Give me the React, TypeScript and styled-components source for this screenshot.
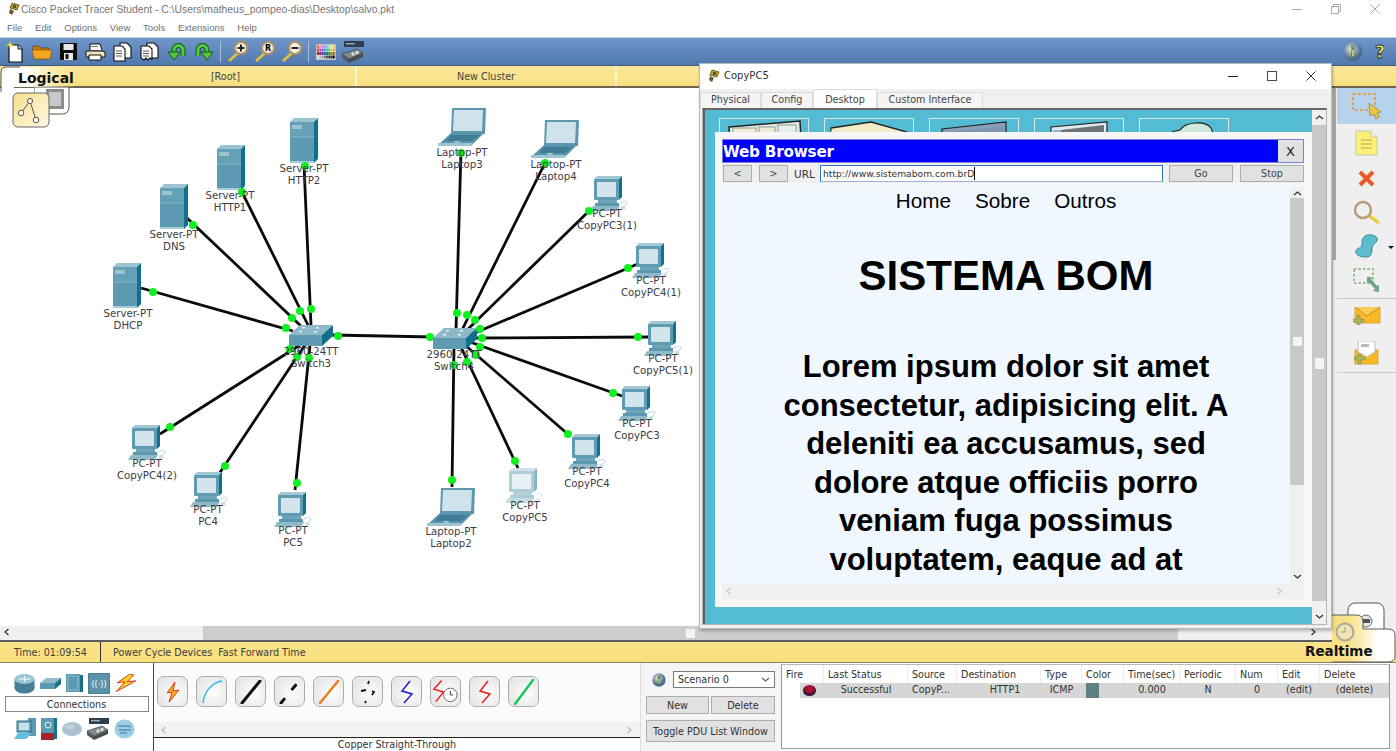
import React from 'react';
import styled, { createGlobalStyle } from 'styled-components';

const Global = createGlobalStyle`
  html, body { margin: 0; padding: 0; background: #fff; overflow: hidden; }
  * { box-sizing: border-box; }
`;
const UI = `"DejaVu Sans", "Liberation Sans", sans-serif`;
const SANS = `"Liberation Sans", Arial, sans-serif`;

const Page = styled.div`
  position: relative; width: 1396px; height: 751px; overflow: hidden;
  display: flex; flex-direction: column; background: #fff; font-family: ${UI};
`;
const TitleBar = styled.div`
  height: 18px; display: flex; align-items: center; padding-left: 7px; gap: 0;
  font: 10.35px ${SANS}; color: #757575; background: #fff;
`;
const WinControls = styled.div`
  margin-left: auto; display: flex; align-items: center; gap: 29px; padding-right: 16px; margin-top: 0;
`;
const MenuBar = styled.div`
  height: 19px; display: flex; align-items: center; padding-left: 7px; gap: 12.8px;
  font: 9.5px ${SANS}; color: #6e6e6e; background: #fff;
`;
const Toolbar = styled.div`
  height: 29px; display: flex; align-items: center; padding-left: 1px;
  background: linear-gradient(#7096c8, #5079b0); border-top: 1px solid #c6d3e4; border-bottom: 1px solid #44587a;
`;
const ToolBtn = styled.div`
  width: 27px; height: 24px; display: flex; align-items: center; justify-content: center; flex: none;
`;
const ToolSep = styled.div`
  width: 1px; height: 21px; background: #a9bdd8; margin: 0 3px 0 3px; flex: none;
`;
const ToolRight = styled.div`
  margin-left: auto; display: flex; align-items: center; gap: 9px; padding-right: 8px;
`;
const TabStrip = styled.div`
  height: 22px; display: flex; background: linear-gradient(#fbe89a, #f8df80);
  border-bottom: 2px solid #6d6550; font: 9.6px ${UI}; color: #444;
`;
const TabCell = styled.div<{ $w: number; $pad?: number }>`
  width: ${p => p.$w}px; height: 100%; display: flex; align-items: center; justify-content: center;
  border-right: 2px solid #fbf3cf; flex: none; padding-left: ${p => p.$pad ?? 0}px;
`;
const Workspace = styled.div`
  flex: 1; display: flex; min-height: 0;
`;
const CanvasColumn = styled.div`
  flex: 1; display: flex; flex-direction: column; min-width: 0;
`;
const Canvas = styled.div`
  position: relative; flex: 1; background: #fff; overflow: hidden;
`;
const LinkLayer = styled.svg`
  position: absolute; left: 0; top: 0;
`;
const Device = styled.div<{ $x: number; $y: number; $faded?: boolean }>`
  position: absolute; left: ${p => p.$x}px; top: ${p => p.$y}px; line-height: 0;
  opacity: ${p => (p.$faded ? 0.5 : 1)};
`;
const NodeLabel = styled.div<{ $x: number; $y: number }>`
  position: absolute; left: ${p => p.$x}px; top: ${p => p.$y}px; transform: translateX(-50%);
  font: 10.2px/11.6px ${UI}; color: #3c3c44; text-align: center; white-space: nowrap;
`;
const HScroll = styled.div`
  height: 16px; display: flex; align-items: center; justify-content: space-between; padding: 0 14px 2px 3px; background: #f0f0f0; position: relative;
  border-bottom: 2px solid #5b5b5b; font-size: 0;
`;
const HThumb = styled.div`
  position: absolute; left: 203px; top: 0; width: 975px; height: 14px; background: #cdcdcd;
  display: flex; align-items: center; justify-content: center;
`;
const ThumbGrip = styled.div<{ $w?: number; $h?: number }>`
  width: ${p => p.$w ?? 9}px; height: ${p => p.$h ?? 9}px; background: #f4f4f4; flex: none;
`;
const VScroll = styled.div`
  width: 5px; flex: none; background: #f0f0f0; border-left: 1px solid #ccc;
`;
const VThumb = styled.div`
  width: 3px; height: 172px; background: #a8a8a8;
`;
const Sidebar = styled.div`
  width: 59px; flex: none; display: flex; flex-direction: column; align-items: center; background: #efefef; position: relative;
`;
const SideItem = styled.div<{ $h: number; $on?: boolean; $line?: boolean }>`
  width: 100%; height: ${p => p.$h}px; display: flex; align-items: center; justify-content: center; flex: none;
  background: ${p => (p.$on ? '#b7d3ec' : 'transparent')};
  border-bottom: ${p => (p.$line ? '1px solid #c9c9c9' : 'none')};
  position: relative;
`;
const Caret = styled.div`
  position: absolute; right: 2px; top: 50%; width: 0; height: 0;
  border-left: 3px solid transparent; border-right: 3px solid transparent; border-top: 3px solid #111;
`;
const StatusBar = styled.div`
  height: 21px; display: flex; align-items: center; font: 9.6px ${UI}; color: #3c3c3c;
  background: linear-gradient(#f8e28a, #f9df7d); border-bottom: 1px solid #8a8258; flex: none;
`;
const TimeCell = styled.div`
  width: 101px; height: 100%; display: flex; align-items: center; padding-left: 14px; border-right: 1px solid #333; flex: none;
`;
const PlayCell = styled.div`
  padding-left: 12px; display: flex; gap: 6px;
`;
const Bottom = styled.div`
  height: 88px; display: flex; flex: none; background: #fff;
`;
const DevicePanel = styled.div`
  width: 153px; flex: none; display: flex; flex-direction: column; align-items: center; background: #fff;
`;
const DeviceRow = styled.div<{ $top: number; $left?: number }>`
  display: flex; align-items: center; gap: 5px; margin-top: ${p => p.$top}px; height: 24px; margin-left: ${p => p.$left ?? 0}px; align-self: flex-start;
`;
const ConnBox = styled.div`
  width: 144px; height: 16px; margin-top: 1px; border: 1px solid #888; display: flex; align-items: center; justify-content: center;
  font: 9.6px ${UI}; color: #333; background: #fff;
`;
const CablePanel = styled.div`
  width: 487px; flex: none; display: flex; flex-direction: column; border-left: 1px solid #444; background: #f8f8f8;
`;
const CableRow = styled.div`
  height: 59px; display: flex; gap: 8px; padding: 13px 0 0 3px; flex: none; background: #fbfbfb;
`;
const CableBtn = styled.div`
  width: 31px; height: 31px; border: 1px solid #aaa; border-radius: 7px; flex: none;
  background: radial-gradient(circle at 60% 55%, #fff, #dedede); box-shadow: inset 0 0 2px #fff;
  display: flex; align-items: center; justify-content: center; line-height: 0;
`;
const CableScroll = styled.div`
  height: 15px; display: flex; align-items: center; justify-content: space-between; padding: 0 6px; background: #f2f2f2; flex: none;
`;
const CableName = styled.div`
  flex: 1; border-top: 1px solid #222; background: #fff; display: flex; align-items: center; justify-content: center;
  font: 9.6px ${UI}; color: #333; padding-left: 0;
`;
const ScenarioPanel = styled.div`
  width: 141px; flex: none; background: #f5f5f5; border-left: 1px solid #ddd; padding: 8px 5px 0 5px;
  display: flex; flex-direction: column;
`;
const ScenarioTop = styled.div`
  display: flex; align-items: center; gap: 7px; margin-left: 6px; height: 17px;
`;
const ScenarioSelect = styled.div`
  width: 102px; height: 17px; border: 1px solid #7a7a7a; background: #fff; display: flex; align-items: center;
  justify-content: space-between; padding: 0 4px; font: 9.6px ${UI}; color: #333;
`;
const GrayBtnRow = styled.div`
  display: flex; gap: 2px; margin-top: 8px;
`;
const GrayBtn = styled.div<{ $w: number; $h: number; $top?: number }>`
  width: ${p => p.$w}px; height: ${p => p.$h}px; margin-top: ${p => p.$top ?? 0}px; background: #e1e1e1; border: 1px solid #adadad;
  display: flex; align-items: center; justify-content: center; font: 9.6px ${UI}; color: #333; flex: none; white-space: nowrap;
`;
const PduPanel = styled.div`
  flex: none; width: 609px; margin: 1px 0 2px 0; border: 1px solid #9a9a9a; border-top-color: #bbb; background: #fff;
`;
const BottomEdge = styled.div`
  flex: 1; background: #f2f2f2;
`;
const PduGrid = styled.div<{ $row?: boolean }>`
  display: grid; grid-template-columns: 42px 84px 49px 84px 41px 42px 56px 56px 42px 42px 69px;
  height: ${p => (p.$row ? 15 : 18)}px; font: 9.6px ${UI}; color: #333; align-items: center;
  background: ${p => (p.$row ? 'linear-gradient(90deg, transparent 18px, #d6d6d6 18px)' : '#fff')};
`;
const PduHead = styled.div`
  height: 100%; display: flex; align-items: center; padding-left: 4px; border-right: 1px solid #ececec; white-space: nowrap;
`;
const PduCell = styled.div<{ $left?: boolean; $shift?: number }>`
  text-align: ${p => (p.$left ? 'left' : 'center')}; padding-left: ${p => p.$shift ?? 0}px; white-space: nowrap; line-height: 13px; height: 15px; padding-top: 0;
`;
const PduDot = styled.div`
  width: 13px; height: 11px; margin-left: 21px; border-radius: 50%; background: radial-gradient(circle at 50% 35%, #b01030 30%, #14143c 75%);
`;
const ColorSwatch = styled.div`
  width: 13px; height: 15px; background: #5f8185; margin-left: 4px;
`;

const Floating = styled.div`
  position: absolute; left: 699px; top: 63px; width: 633px; height: 566px; background: #f0f0f0;
  border: 1px solid #b9b9b9; box-shadow: 1px 2px 3px rgba(0,0,0,.25); display: flex; flex-direction: column;
`;
const FloatTitle = styled.div`
  height: 25px; background: #fff; display: flex; align-items: center; padding: 0 0 2px 7px; gap: 3px;
  font: 10px ${UI}; color: #333; flex: none;
`;
const FloatControls = styled.div`
  margin-left: auto; display: flex; align-items: center; gap: 29px; padding-right: 15px;
`;
const TabsRow = styled.div`
  height: 19px; display: flex; align-items: flex-end; flex: none; background: #f0f0f0;
`;
const WinTab = styled.div<{ $w: number; $on?: boolean }>`
  width: ${p => p.$w}px; height: ${p => (p.$on ? 19 : 16)}px; background: ${p => (p.$on ? '#fff' : '#f4f4f4')};
  border: 1px solid #dcdcdc; border-bottom: none; display: flex; align-items: center; justify-content: center;
  font: 9.6px ${UI}; color: #444; flex: none; padding-bottom: ${p => (p.$on ? 0 : 2)}px;
`;
const FrameWrap = styled.div`
  flex: 1; margin: 0 4px 3px 2px; border: 1px solid #b5b5b5; border-top: 2px solid #666; display: flex; min-height: 0; background: #fff;
`;
const Teal = styled.div`
  flex: 1; position: relative; background: #53bcd4; border-left: 2px solid #5d5d5d; overflow: hidden; padding: 8px 0 0 14px;
  display: flex; gap: 15px; align-items: flex-start;
`;
const AppTile = styled.div`
  width: 90px; height: 40px; border: 1px solid #d9e9dd; flex: none; display: flex; justify-content: center; padding-top: 1px;
`;
const FrameScroll = styled.div`
  width: 14px; flex: none; background: #f0f0f0; display: flex; flex-direction: column; align-items: center; margin-right: 0;
`;
const ScrollArrow = styled.div`
  height: 15px; flex: none; display: flex; align-items: center; justify-content: center; line-height: 0;
`;
const FrameThumb = styled.div`
  flex: 1; width: 100%; background: #c9c9c9; margin-bottom: 8px; display: flex; align-items: center; justify-content: center;
`;
const Overlay = styled.div`
  position: absolute; left: 10px; top: 22px; right: 0; bottom: 17px; background: #f7f7f7; padding: 7px 8px 8px 7px;
  display: flex; flex-direction: column;
`;
const BrowserHead = styled.div`
  height: 24px; background: #0000ff; border: 1px solid #7c7ce0; display: flex; align-items: center; justify-content: space-between; flex: none;
`;
const BrowserTitle = styled.div`
  font: bold 15.2px ${UI}; color: #fff; padding-top: 1px; letter-spacing: -0.2px;
`;
const BrowserClose = styled.div`
  width: 25px; height: 22px; background: #e1e1e1; display: flex; align-items: center; justify-content: center;
  font: 13px ${UI}; color: #222;
`;
const BrowserBar = styled.div`
  height: 20px; display: flex; align-items: center; flex: none; padding: 1px 0 0 1px; background: #f0f0f0;
`;
const NavBtn = styled.div<{ $w: number; $ml?: number }>`
  width: ${p => p.$w}px; margin-left: ${p => p.$ml ?? 0}px; height: 17px; background: #e1e1e1; border: 1px solid #adadad;
  display: flex; align-items: center; justify-content: center; font: 9.6px ${UI}; color: #444; flex: none;
`;
const UrlLabel = styled.div`
  font: 10.5px ${UI}; color: #333; margin: 0 5px 0 6px; width: 21px; flex: none;
`;
const UrlInput = styled.div`
  width: 343px; height: 17px; border: 1px solid #2a74c8; border-bottom-color: #9db4da; background: #fff; flex: none; padding-left: 2px;
  display: flex; align-items: center; font: 9.2px ${UI}; color: #333;
`;
const Cursor = styled.span`
  display: inline-block; width: 1px; height: 13px; background: #111; margin-left: 0;
`;
const WebArea = styled.div`
  flex: 1; display: flex; flex-wrap: wrap; align-content: flex-start; background: #f0f0f0; min-height: 0; margin-top: 3px;
`;
const WebBody = styled.div`
  width: 568px; height: 398px; background: #f0f7ff; overflow: hidden; text-align: center; font-family: ${SANS}; color: #000;
`;
const WebNav = styled.div`
  height: 30px; display: flex; justify-content: center; align-items: center; gap: 24px; font-size: 20.7px;
`;
const WebH1 = styled.h1`
  margin: 35px 0 0; font-size: 42px; line-height: 50px; font-weight: bold;
`;
const WebP = styled.p`
  margin: 47px 0 0; padding: 0 50px; font-size: 31px; line-height: 38.5px; font-weight: bold;
`;
const WebVScroll = styled.div`
  width: 14px; height: 398px; flex: none; display: flex; flex-direction: column; align-items: center; background: #f0f0f0;
`;
const WebThumb = styled.div`
  width: 100%; height: 287px; margin-top: -3px; background: #c9c9c9; display: flex; align-items: center; justify-content: center; flex: none;
`;
const WebSpacer = styled.div`
  flex: 1;
`;
const WebHScroll = styled.div`
  width: 100%; height: 14px; display: flex; justify-content: space-between; align-items: center; padding: 0 20px 0 3px; background: #f0f0f0;
`;
const OverTab = styled.div<{ $x: number; $y: number }>`
  position: absolute; left: ${p => p.$x}px; top: ${p => p.$y}px; line-height: 0;
`;
const TabTitle = styled.div<{ $x: number; $y: number; $size: number }>`
  position: absolute; left: ${p => p.$x}px; top: ${p => p.$y}px; font: bold ${p => p.$size}px/1 ${UI}; color: #111; white-space: nowrap;
`;

/* ---------- drawings ---------- */
const ServerIcon = () => (
  <svg width="28" height="45" viewBox="0 0 28 45">
    <polygon points="0,4 4,0 28,0 24,4" fill="#9cc3d1" />
    <polygon points="24,4 28,0 28,41 24,45" fill="#0f6f8c" />
    <rect x="0" y="4" width="24" height="41" fill="#5b9ab0" />
    <rect x="0" y="4" width="24" height="15" fill="#64a1b6" />
    <line x1="0" y1="19" x2="24" y2="19" stroke="#84b5c6" />
    <rect x="2" y="7" width="10" height="4" fill="#9fc4d0" />
    <rect x="0" y="43" width="24" height="2" fill="#a8ccd8" />
  </svg>
);
const SwitchIcon = () => (
  <svg width="44" height="23" viewBox="0 0 44 23">
    <polygon points="0,11 11,1 44,1 33,11" fill="#8db8c8" />
    <polygon points="33,11 44,1 44,12 33,22" fill="#116f8b" />
    <rect x="0" y="11" width="33" height="11" fill="#5c9bb1" />
    <g fill="#e8f2f5">
      <rect x="13" y="3" width="3" height="1.5" /><rect x="27" y="3" width="3" height="1.5" />
      <rect x="10" y="7" width="3" height="1.5" /><rect x="25" y="7" width="3" height="1.5" />
    </g>
  </svg>
);
const LaptopIcon = () => (
  <svg width="48" height="39" viewBox="0 0 48 39">
    <polygon points="14,1 48,1 47,27 13,27" fill="#5d97ae" />
    <polygon points="16,3 45,3 44,24 15,24" fill="#cfe3ec" />
    <polygon points="13,26 46,26 34,38 0,38" fill="#5a94aa" />
    <polygon points="0,36 35,36 34,39 0,39" fill="#9fc5d2" />
    <polygon points="13,28 42,28 34,34 8,34" fill="#3f7e96" />
    <ellipse cx="19" cy="35" rx="3" ry="1.3" fill="#9cc2cf" />
  </svg>
);
const PcIcon = () => (
  <svg width="40" height="36" viewBox="0 0 40 36">
    <polygon points="4,3 7,0 32,0 29,3" fill="#a4c7d4" />
    <polygon points="29,3 32,0 32,21 29,24" fill="#14708c" />
    <rect x="4" y="3" width="25" height="21" rx="1" fill="#5f9cb1" />
    <rect x="7" y="6" width="19" height="15" rx="1" fill="#d3e4ec" />
    <rect x="8" y="24" width="19" height="3" fill="#6ea5b8" />
    <rect x="5" y="27" width="24" height="3" fill="#5a98ae" />
    <polygon points="3,30 30,30 27,35 0,35" fill="#8fbac9" />
    <path d="M30 27c3-2 7-2 7 0l-3 4" fill="none" stroke="#b9d3dc" strokeWidth="1" />
    <ellipse cx="33" cy="32" rx="2.6" ry="2" fill="#cfe0e7" />
  </svg>
);

const Mag = ({ sign }: { sign: string }) => (
  <svg width="22" height="22" viewBox="0 0 22 22">
    <line x1="12" y1="11" x2="2" y2="20" stroke="#e7c134" strokeWidth="2.6" />
    <circle cx="14" cy="7" r="6" fill="#f4f4ef" stroke="#b5925c" strokeWidth="2" />
    {sign === 'R' ? <text x="14" y="10" fontSize="8" fontWeight="bold" textAnchor="middle" fontFamily="DejaVu Sans">R</text> :
      <g stroke="#222" strokeWidth="2"><line x1="10.5" y1="7" x2="17.5" y2="7" />{sign === '+' && <line x1="14" y1="3.5" x2="14" y2="10.5" />}</g>}
  </svg>
);
const NewDoc = () => (
  <svg width="18" height="22" viewBox="0 0 18 22">
    <path d="M3 4h9l4 4v13H3z" fill="#fff" stroke="#111" strokeWidth="1.2" />
    <path d="M12 4v4h4" fill="#ddd" stroke="#111" />
    <path d="M4 0l1 3 3 1-3 1-1 3-1-3-3-1 3-1z" fill="#f6e03c" />
  </svg>
);
const Folder = () => (
  <svg width="20" height="16" viewBox="0 0 20 16">
    <path d="M1 4V2h6l2 2h8v3H1z" fill="#c77f10" stroke="#5c3b08" strokeWidth=".7" />
    <path d="M0 6h20l-2 9H2z" fill="#f6a51e" stroke="#7a4d0c" strokeWidth=".7" />
  </svg>
);
const Floppy = () => (
  <svg width="17" height="17" viewBox="0 0 17 17">
    <rect width="17" height="17" rx="1" fill="#0d0d0d" />
    <rect x="3.5" y="1" width="10" height="6" fill="#e8e8e8" />
    <rect x="4" y="10" width="9" height="7" fill="#e8e8e8" />
    <rect x="5.5" y="11" width="3" height="5" fill="#111" />
  </svg>
);
const Printer = () => (
  <svg width="21" height="18" viewBox="0 0 21 18">
    <path d="M5 7V1h10l2 6" fill="#fff" stroke="#111" />
    <path d="M1 8h16l3 1v5H1z" fill="#f1e4bb" stroke="#111" />
    <path d="M4 12h12v5H4z" fill="#fff" stroke="#111" />
    <rect x="6" y="3" width="7" height="1" fill="#777" />
  </svg>
);
const Docs = ({ torn }: { torn?: boolean }) => (
  <svg width="20" height="20" viewBox="0 0 20 20">
    <path d="M7 1h7l4 4v11H7z" fill="#fff" stroke="#111" strokeWidth="1.1" />
    <path d={torn ? 'M1 4h8l3 3v10l-2-1-2 2-2-2-2 2-3-2z' : 'M1 4h8l3 3v12H1z'} fill="#fff" stroke="#111" strokeWidth="1.1" />
    <g stroke="#555"><line x1="3" y1="9" x2="9" y2="9" /><line x1="3" y1="11.5" x2="9" y2="11.5" /><line x1="3" y1="14" x2="9" y2="14" /></g>
  </svg>
);
const Turn = ({ flip }: { flip?: boolean }) => (
  <svg width="20" height="19" viewBox="0 0 20 19">
    <g transform={flip ? 'translate(20,0) scale(-1,1)' : undefined}>
      <path d="M16 14V8a4.5 4.5 0 0 0-9 0v3" fill="none" stroke="#0f5a18" strokeWidth="5" />
      <path d="M16 14V8a4.5 4.5 0 0 0-9 0v3" fill="none" stroke="#55c742" strokeWidth="3" />
      <path d="M1 10h12l-6 8z" fill="#55c742" stroke="#0f5a18" />
    </g>
  </svg>
);
const Palette = () => {
  const colors = ['#e66', '#e9a', '#c8e', '#99e', '#8ce', '#8e9', '#ee8', '#fb6', '#d44', '#c4a', '#85d', '#58d', '#4bc', '#5c6', '#cc4', '#e94', '#a22', '#828', '#539', '#269', '#187', '#383', '#880', '#a60', '#ddd', '#bbb', '#999', '#777', '#555', '#333', '#222', '#000'];
  return (
    <svg width="20" height="16" viewBox="0 0 20 16">
      <rect width="20" height="16" fill="#eee" stroke="#999" />
      {colors.map((c, i) => <rect key={i} x={1 + (i % 8) * 2.25} y={1 + Math.floor(i / 8) * 3.5} width="2" height="3" fill={c} />)}
    </svg>
  );
};
const Rack = ({ w = 22 }: { w?: number }) => (
  <svg width={w} height={w} viewBox="0 0 22 22">
    <rect x="2" y="0" width="20" height="6" fill="#2f3f4f" />
    <rect x="4" y="2" width="9" height="1.4" fill="#9ab" />
    <polygon points="0,13 15,8 21,12 7,18" fill="#7d8b8b" stroke="#333" strokeWidth=".6" />
    <polygon points="0,13 7,18 7,22 0,17" fill="#556" />
    <polygon points="7,18 21,12 21,16 7,22" fill="#454f4f" />
    <circle cx="11" cy="13" r="1.7" fill="#ddd" /><circle cx="15" cy="11.5" r="1.7" fill="#ddd" />
  </svg>
);
const InfoOrb = ({ size = 20 }: { size?: number }) => (
  <svg width={size} height={size} viewBox="0 0 20 20">
    <defs><radialGradient id="orb" cx="40%" cy="35%"><stop offset="0" stopColor="#dfe8ef" /><stop offset="1" stopColor="#4d6f8e" /></radialGradient></defs>
    <circle cx="10" cy="10" r="9.5" fill="url(#orb)" />
    <text x="10" y="15" textAnchor="middle" fontSize="14" fontWeight="bold" fill="#f3e14c" stroke="#222" strokeWidth=".5" fontFamily="DejaVu Sans">i</text>
  </svg>
);
const Question = () => (
  <svg width="16" height="22" viewBox="0 0 16 22">
    <text x="8" y="17" textAnchor="middle" fontSize="18" fontWeight="bold" fill="#f5e83c" stroke="#1d2b44" strokeWidth=".8" fontFamily="DejaVu Sans">?</text>
  </svg>
);
const Minimize = ({ c }: { c: string }) => <svg width="10" height="10"><line x1="0" y1="5.5" x2="10" y2="5.5" stroke={c} /></svg>;
const Restore = ({ c }: { c: string }) => (
  <svg width="10" height="10"><rect x=".5" y="2.5" width="7" height="7" fill="#fff" stroke={c} /><path d="M2.5 2.5v-2h7v7h-2" fill="none" stroke={c} /></svg>
);
const Maximize = ({ c }: { c: string }) => <svg width="10" height="10"><rect x=".5" y=".5" width="9" height="9" fill="none" stroke={c} /></svg>;
const CloseX = ({ c }: { c: string }) => <svg width="10" height="10"><path d="M.5.5l9 9M9.5.5l-9 9" stroke={c} /></svg>;
const AppGlyph = () => (
  <svg width="14" height="14" viewBox="0 0 14 14">
    <path d="M5 1l7 2-2 5-7-2z" fill="#c59a2c" stroke="#4b3a10" strokeWidth=".7" />
    <path d="M3 7l4 2-2 4-3-2z" fill="#6a5a2c" />
    <rect x="6" y="3" width="3" height="3" fill="#2f6d2f" />
  </svg>
);
const Chevron = ({ dir, c = '#333' }: { dir: 'up' | 'down' | 'left' | 'right'; c?: string }) => {
  const d = { up: 'M1 5l3.5-3L8 5', down: 'M1 2l3.5 3L8 2', left: 'M5.5 1L2 4l3.5 3', right: 'M2.5 1L6 4 2.5 7' }[dir];
  return <svg width="9" height="8" viewBox="0 0 9 8"><path d={d} fill="none" stroke={c} strokeWidth="1.3" /></svg>;
};

/* desktop tile glimpses */
const TileArt = ({ k }: { k: number }) => {
  if (k === 0) return (
    <svg width="76" height="38" viewBox="0 0 76 38"><polygon points="3,7 74,1 76,38 5,38" fill="#dfe9e4" stroke="#222" strokeWidth="1.5" /><g fill="#f1edd4" stroke="#999"><rect x="7" y="8" width="23" height="30" /><rect x="33" y="7" width="16" height="30" /><rect x="52" y="5" width="18" height="33" fill="#e6f0ee" /></g></svg>
  );
  if (k === 1) return (
    <svg width="80" height="38" viewBox="0 0 80 38"><polygon points="2,8 42,2 78,12 78,38 2,38" fill="#f2ecc8" stroke="#222" strokeWidth="1.3" /><polygon points="2,8 8,38 2,38" fill="#cfe0dc" /></svg>
  );
  if (k === 2) return (
    <svg width="68" height="38" viewBox="0 0 68 38"><polygon points="2,9 66,2 66,38 2,38" fill="#88a0b8" stroke="#222" strokeWidth="1.2" /><polygon points="6,12 64,6 64,38 6,38" fill="#7f97b3" /></svg>
  );
  if (k === 3) return (
    <svg width="60" height="38" viewBox="0 0 60 38"><polygon points="2,7 58,2 58,38 2,38" fill="#dfeaf2" stroke="#222" strokeWidth="1.2" /><polygon points="12,10 55,5 55,38 12,38" fill="#6e7478" /><rect x="4" y="10" width="8" height="28" fill="#8fb6dd" /></svg>
  );
  return (
    <svg width="62" height="38" viewBox="0 0 62 38"><path d="M3 38c0-18 10-26 24-28 6-9 26-9 31-2 3 5 3 20 2 30z" fill="#cfe8dc" stroke="#222" strokeWidth="1.2" /></svg>
  );
};

/* sidebar drawings */
const SelectTool = () => (
  <svg width="30" height="28" viewBox="0 0 30 28">
    <rect x="1" y="2" width="22" height="16" fill="none" stroke="#f0951a" strokeWidth="1.6" strokeDasharray="3 2" />
    <path d="M17 11l12 9-4 1 2 4-3 2-2-5-4 2z" fill="#e8c742" stroke="#8a7a3a" strokeWidth=".7" />
  </svg>
);
const Note = () => (
  <svg width="23" height="26" viewBox="0 0 23 26">
    <path d="M1 1h15l6 6v18H1z" fill="#fdf17a" stroke="#c8c8a0" />
    <path d="M16 1v6h6" fill="#eee" stroke="#c8c8a0" />
    <g stroke="#b0a850"><line x1="6" y1="10" x2="17" y2="10" /><line x1="6" y1="14" x2="17" y2="14" /><line x1="6" y1="18" x2="17" y2="18" /></g>
  </svg>
);
const DeleteX = () => (
  <svg width="17" height="17" viewBox="0 0 17 17"><path d="M2 2l13 13M15 2L2 15" stroke="#ea5a22" strokeWidth="4" /></svg>
);
const Inspect = () => (
  <svg width="28" height="25" viewBox="0 0 28 25">
    <line x1="15" y1="15" x2="26" y2="23" stroke="#eecb2e" strokeWidth="3.4" />
    <circle cx="10" cy="10" r="8" fill="none" stroke="#b79a76" strokeWidth="2.4" />
  </svg>
);
const Blob = () => (
  <svg width="24" height="24" viewBox="0 0 24 24">
    <path d="M9 3c2-3 11-3 13 1 2 4-5 6-5 10s0 9-6 9-11-2-10-6 6-2 6-7 0-5 2-7z" fill="#5fbccd" stroke="#3a8899" />
  </svg>
);
const Resize = () => (
  <svg width="27" height="26" viewBox="0 0 27 26">
    <rect x="1" y="1" width="19" height="14" fill="none" stroke="#7cb46c" strokeWidth="1.5" strokeDasharray="2.5 2" />
    <path d="M14 9l5 0-1 2 6 7 2-1 0 7-6-1 2-2-6-7-2 1z" fill="#6da581" />
  </svg>
);
const MailAdd = () => (
  <svg width="28" height="18" viewBox="0 0 28 18">
    <rect x="2" y="0" width="25" height="16" fill="#fbb924" stroke="#d8a648" />
    <path d="M2 0l12 9L27 0" fill="#f7cd55" stroke="#c48a20" />
    <path d="M4 8v4H0v3h4v3h3v-3h4v-3H7V8z" fill="#a8bb50" stroke="#777" strokeWidth=".5" />
  </svg>
);
const MailOpen = () => (
  <svg width="25" height="24" viewBox="0 0 25 24">
    <rect x="1" y="9" width="23" height="14" fill="#fbb924" stroke="#d8a648" />
    <path d="M4 0h17v11l-8 5-9-5z" fill="#fff" stroke="#bbb" />
    <rect x="7" y="3" width="8" height="3" fill="#bbb" />
    <path d="M4 13v3H0v3h4v4h3v-4h4v-3H7v-3z" fill="#a8bb50" stroke="#777" strokeWidth=".5" />
  </svg>
);

/* bottom drawings */
const RouterI = () => (
  <svg width="21" height="21" viewBox="0 0 21 21">
    <ellipse cx="10.5" cy="15" rx="10" ry="5.5" fill="#467f97" /><rect x=".5" y="6" width="20" height="9" fill="#467f97" />
    <ellipse cx="10.5" cy="6" rx="10" ry="5" fill="#9cc6d5" /><path d="M5 6h11M10.5 3v6" stroke="#fff" />
  </svg>
);
const SwitchI = () => (
  <svg width="21" height="12" viewBox="0 0 21 12"><polygon points="0,6 6,1 21,1 15,6" fill="#8fbccb" /><polygon points="15,6 21,1 21,7 15,12" fill="#1a6f8b" /><rect x="0" y="6" width="15" height="6" fill="#5b9ab0" /></svg>
);
const HubI = () => (
  <svg width="17" height="18" viewBox="0 0 17 18"><rect width="14" height="18" fill="#5b9ab0" /><rect x="14" y="1" width="3" height="17" fill="#186f8a" /><rect x="2" y="2" width="10" height="14" fill="none" stroke="#8cc0d0" /></svg>
);
const WirelessI = () => (
  <svg width="22" height="21" viewBox="0 0 22 21"><rect width="22" height="21" rx="3" fill="#5b93aa" stroke="#2f6a82" /><text x="11" y="14" textAnchor="middle" fontSize="8" fill="#fff" fontFamily="DejaVu Sans">((·))</text></svg>
);
const Bolt = ({ w = 22 }: { w?: number }) => (
  <svg width={w} height={w * .8} viewBox="0 0 22 18"><path d="M15 0L2 9l8-1-9 10 20-11-9 1 7-7z" fill="#f9d423" stroke="#e0321a" strokeWidth="1" /></svg>
);
const PcLaptopI = () => (
  <svg width="22" height="22" viewBox="0 0 22 22"><rect x="14" y="0" width="8" height="18" fill="#5b9ab0" /><rect x="3" y="3" width="14" height="11" fill="#6fa9bd" stroke="#2d7088" /><rect x="5" y="5" width="10" height="7" fill="#c9e0e8" /><polygon points="4,15 18,15 12,21 0,21" fill="#60c0e0" /></svg>
);
const ServerI = () => (
  <svg width="16" height="22" viewBox="0 0 16 22"><rect width="13" height="15" fill="#5b9ab0" /><rect x="13" y="0" width="3" height="21" fill="#186f8a" /><rect y="15" width="13" height="7" fill="#a32328" /><circle cx="7" cy="7" r="3" fill="none" stroke="#dfe" /></svg>
);
const CloudI = () => (
  <svg width="20" height="14" viewBox="0 0 20 14"><ellipse cx="10" cy="7" rx="10" ry="7" fill="#a9c1ce" /><ellipse cx="8" cy="5" rx="5" ry="3" fill="#bdd0da" /></svg>
);
const CircleI = () => (
  <svg width="21" height="20" viewBox="0 0 21 20"><ellipse cx="10.5" cy="10" rx="10" ry="9.5" fill="#9ccde0" /><path d="M4 7h10l3 1M5 11h12M6 14h7" stroke="#4f94ad" strokeWidth="1.4" fill="none" /></svg>
);
const CableArt = ({ k }: { k: number }) => {
  switch (k) {
    case 0: return <svg width="16" height="20" viewBox="0 0 16 20"><path d="M10 0L2 11l5-1-3 10 10-12-6 1z" fill="#f9b020" stroke="#e0321a" /></svg>;
    case 1: return <svg width="22" height="24" viewBox="0 0 22 24"><path d="M2 23C3 12 10 3 21 1" fill="none" stroke="#2ab7e8" strokeWidth="1.4" /></svg>;
    case 2: return <svg width="22" height="24" viewBox="0 0 22 24"><line x1="2" y1="23" x2="20" y2="1" stroke="#111" strokeWidth="3" strokeLinecap="round" /></svg>;
    case 3: return <svg width="22" height="24" viewBox="0 0 22 24"><line x1="2" y1="23" x2="20" y2="1" stroke="#111" strokeWidth="3" strokeLinecap="round" strokeDasharray="5 13" /></svg>;
    case 4: return <svg width="22" height="24" viewBox="0 0 22 24"><line x1="2" y1="23" x2="20" y2="1" stroke="#f07a18" strokeWidth="2.4" strokeLinecap="round" /></svg>;
    case 5: return <svg width="16" height="24" viewBox="0 0 16 24"><path d="M9 1l-1 3M1 11l5-1M12 11l2 1-2 3M6 21l-1 2" stroke="#111" strokeWidth="1.8" fill="none" /></svg>;
    case 6: return <svg width="14" height="24" viewBox="0 0 14 24"><path d="M10 1L2 11l10 3-8 9" fill="none" stroke="#1a1ae0" strokeWidth="1.5" /></svg>;
    case 7: return <svg width="30" height="26" viewBox="0 0 30 26"><path d="M11 1L3 10l10 3-8 10" fill="none" stroke="#ef1c1c" strokeWidth="1.5" /><circle cx="20" cy="16" r="7" fill="#fff" stroke="#666" /><path d="M20 12v4h3" stroke="#333" fill="none" /></svg>;
    case 8: return <svg width="14" height="24" viewBox="0 0 14 24"><path d="M10 1L2 11l10 3-8 9" fill="none" stroke="#ef1c1c" strokeWidth="1.5" /></svg>;
    default: return <svg width="22" height="26" viewBox="0 0 22 26"><line x1="2" y1="25" x2="20" y2="1" stroke="#14c85a" strokeWidth="2.4" strokeLinecap="round" /></svg>;
  }
};

/* ---------- topology data (page coordinates) ---------- */
type Kind = 'server' | 'switch' | 'laptop' | 'pc';
type Node = { kind: Kind; x: number; y: number; lx: number; ly: number; a: string; b: string; faded?: boolean };
const TOP = 88;
const nodes: Node[] = [
  { kind: 'server', x: 290, y: 118, lx: 304, ly: 163, a: 'Server-PT', b: 'HTTP2' },
  { kind: 'server', x: 217, y: 145, lx: 230, ly: 190, a: 'Server-PT', b: 'HTTP1' },
  { kind: 'server', x: 160, y: 184, lx: 174, ly: 229, a: 'Server-PT', b: 'DNS' },
  { kind: 'server', x: 113, y: 263, lx: 128, ly: 308, a: 'Server-PT', b: 'DHCP' },
  { kind: 'switch', x: 289, y: 324, lx: 311, ly: 346, a: '2960-24TT', b: 'Switch3' },
  { kind: 'switch', x: 433, y: 327, lx: 454, ly: 349, a: '2960-24TT', b: 'Switch4' },
  { kind: 'laptop', x: 438, y: 107, lx: 462, ly: 147, a: 'Laptop-PT', b: 'Laptop3' },
  { kind: 'laptop', x: 531, y: 119, lx: 556, ly: 159, a: 'Laptop-PT', b: 'Laptop4' },
  { kind: 'pc', x: 590, y: 176, lx: 607, ly: 208, a: 'PC-PT', b: 'CopyPC3(1)' },
  { kind: 'pc', x: 632, y: 243, lx: 651, ly: 275, a: 'PC-PT', b: 'CopyPC4(1)' },
  { kind: 'pc', x: 644, y: 321, lx: 663, ly: 353, a: 'PC-PT', b: 'CopyPC5(1)' },
  { kind: 'pc', x: 618, y: 386, lx: 637, ly: 418, a: 'PC-PT', b: 'CopyPC3' },
  { kind: 'pc', x: 568, y: 434, lx: 587, ly: 466, a: 'PC-PT', b: 'CopyPC4' },
  { kind: 'pc', x: 505, y: 468, lx: 525, ly: 500, a: 'PC-PT', b: 'CopyPC5', faded: true },
  { kind: 'laptop', x: 427, y: 487, lx: 451, ly: 526, a: 'Laptop-PT', b: 'Laptop2' },
  { kind: 'pc', x: 128, y: 425, lx: 147, ly: 458, a: 'PC-PT', b: 'CopyPC4(2)' },
  { kind: 'pc', x: 190, y: 472, lx: 208, ly: 504, a: 'PC-PT', b: 'PC4' },
  { kind: 'pc', x: 274, y: 492, lx: 293, ly: 525, a: 'PC-PT', b: 'PC5' },
];
const links: [number, number, number, number, number, number, number, number][] = [
  [141, 288, 293, 331, 153, 292, 286, 328],
  [187, 218, 302, 327, 193, 225, 292, 318],
  [240, 188, 308, 325, 242, 192, 300, 311],
  [304, 165, 311, 325, 305, 166, 311, 309],
  [332, 335, 433, 337, 338, 336, 430, 337],
  [160, 434, 300, 345, 170, 427, 290, 349],
  [219, 474, 305, 345, 225, 466, 297, 357],
  [295, 490, 310, 345, 297, 483, 309, 358],
  [461, 150, 456, 330, 461, 153, 457, 313],
  [545, 163, 462, 330, 545, 163, 467, 315],
  [589, 211, 465, 332, 589, 211, 475, 320],
  [640, 263, 470, 335, 628, 268, 480, 329],
  [650, 337, 475, 338, 638, 337, 482, 338],
  [622, 396, 470, 342, 613, 393, 480, 347],
  [570, 436, 465, 345, 568, 434, 476, 355],
  [518, 468, 460, 345, 515, 461, 467, 362],
  [452, 487, 454, 345, 452, 480, 454, 365],
];
const kindIcon = (k: Kind) => (k === 'server' ? <ServerIcon /> : k === 'switch' ? <SwitchIcon /> : k === 'laptop' ? <LaptopIcon /> : <PcIcon />);

const menu = ['File', 'Edit', 'Options', 'View', 'Tools', 'Extensions', 'Help'];
const heads = ['Fire', 'Last Status', 'Source', 'Destination', 'Type', 'Color', 'Time(sec)', 'Periodic', 'Num', 'Edit', 'Delete'];

export default function App() {
  return (
    <Page>
      <Global />
      <TitleBar>
        <AppGlyph />
        <span>Cisco Packet Tracer Student - C:\Users\matheus_pompeo-dias\Desktop\salvo.pkt</span>
        <WinControls><Minimize c="#aaa" /><Restore c="#aaa" /><CloseX c="#aaa" /></WinControls>
      </TitleBar>
      <MenuBar>{menu.map(m => <span key={m}>{m}</span>)}</MenuBar>
      <Toolbar>
        <ToolBtn><NewDoc /></ToolBtn><ToolBtn><Folder /></ToolBtn><ToolBtn><Floppy /></ToolBtn><ToolBtn><Printer /></ToolBtn>
        <ToolBtn><Docs /></ToolBtn><ToolBtn><Docs torn /></ToolBtn><ToolBtn><Turn /></ToolBtn><ToolBtn><Turn flip /></ToolBtn>
        <ToolSep />
        <ToolBtn><Mag sign="+" /></ToolBtn><ToolBtn><Mag sign="R" /></ToolBtn><ToolBtn><Mag sign="-" /></ToolBtn>
        <ToolSep />
        <ToolBtn><Palette /></ToolBtn><ToolBtn><Rack /></ToolBtn>
        <ToolRight><InfoOrb /><Question /></ToolRight>
      </Toolbar>
      <TabStrip>
        <TabCell $w={357} $pad={96}>[Root]</TabCell>
        <TabCell $w={260}>New Cluster</TabCell>
      </TabStrip>
      <Workspace>
        <CanvasColumn>
          <Canvas>
            <LinkLayer width="1332" height="539" viewBox={`0 ${TOP} 1332 539`}>
              {links.map((l, i) => <line key={i} x1={l[0]} y1={l[1]} x2={l[2]} y2={l[3]} stroke="#0a0a0a" strokeWidth="2.8" />)}
            </LinkLayer>
            {nodes.map(n => (
              <Device key={n.b} $x={n.x} $y={n.y - TOP} $faded={n.faded}>{kindIcon(n.kind)}</Device>
            ))}
            <LinkLayer width="1332" height="539" viewBox={`0 ${TOP} 1332 539`}>
              {links.map((l, i) => (
                <g key={i} fill="#11ee22">
                  <circle cx={l[4]} cy={l[5]} r="4" /><circle cx={l[6]} cy={l[7]} r="4" />
                </g>
              ))}
            </LinkLayer>
            {nodes.map(n => (
              <NodeLabel key={n.b} $x={n.lx} $y={n.ly - TOP}>{n.a}<br />{n.b}</NodeLabel>
            ))}
          </Canvas>
          <HScroll>
            <Chevron dir="left" />
            <HThumb><ThumbGrip /></HThumb>
            <Chevron dir="right" />
          </HScroll>
        </CanvasColumn>
        <VScroll><VThumb /></VScroll>
        <Sidebar>
          <SideItem $h={36} $on><SelectTool /></SideItem>
          <SideItem $h={37}><Note /></SideItem>
          <SideItem $h={34}><DeleteX /></SideItem>
          <SideItem $h={34}><Inspect /></SideItem>
          <SideItem $h={34}><Blob /><Caret /></SideItem>
          <SideItem $h={36} $line><Resize /></SideItem>
          <SideItem $h={34}><MailAdd /></SideItem>
          <SideItem $h={40} $line><MailOpen /></SideItem>
        </Sidebar>
      </Workspace>
      <StatusBar>
        <TimeCell>Time: 01:09:54</TimeCell>
        <PlayCell><span>Power Cycle Devices</span><span>Fast Forward Time</span></PlayCell>
      </StatusBar>
      <Bottom>
        <DevicePanel>
          <DeviceRow $top={8} $left={14}><RouterI /><SwitchI /><HubI /><WirelessI /><Bolt /></DeviceRow>
          <ConnBox>Connections</ConnBox>
          <DeviceRow $top={5} $left={14}><PcLaptopI /><ServerI /><CloudI /><Rack /><CircleI /></DeviceRow>
        </DevicePanel>
        <CablePanel>
          <CableRow>
            {Array.from({ length: 10 }).map((_, i) => <CableBtn key={i}><CableArt k={i} /></CableBtn>)}
          </CableRow>
          <CableScroll><Chevron dir="left" c="#bbb" /><Chevron dir="right" c="#bbb" /></CableScroll>
          <CableName>Copper Straight-Through</CableName>
        </CablePanel>
        <ScenarioPanel>
          <ScenarioTop><InfoOrb size={14} /><ScenarioSelect>Scenario 0<Chevron dir="down" c="#666" /></ScenarioSelect></ScenarioTop>
          <GrayBtnRow><GrayBtn $w={63} $h={18}>New</GrayBtn><GrayBtn $w={64} $h={18}>Delete</GrayBtn></GrayBtnRow>
          <GrayBtn $w={129} $h={22} $top={6}>Toggle PDU List Window</GrayBtn>
        </ScenarioPanel>
        <PduPanel>
          <PduGrid>{heads.map(h => <PduHead key={h}>{h}</PduHead>)}</PduGrid>
          <PduGrid $row>
            <PduDot />
            <PduCell>Successful</PduCell>
            <PduCell $left $shift={4}>CopyP...</PduCell>
            <PduCell $shift={12}>HTTP1</PduCell>
            <PduCell $shift={0}>ICMP</PduCell>
            <ColorSwatch />
            <PduCell>0.000</PduCell>
            <PduCell>N</PduCell>
            <PduCell>0</PduCell>
            <PduCell>(edit)</PduCell>
            <PduCell>(delete)</PduCell>
          </PduGrid>
        </PduPanel>
        <BottomEdge />
      </Bottom>

      <OverTab $x={34} $y={85}>
        <svg width="36" height="30" viewBox="0 0 36 30">
          <path d="M0 2H35V22q0 7-7 7H0z" fill="#fff" stroke="#555" />
          <rect x="12" y="4" width="18" height="20" fill="#8c8c8c" />
          <rect x="15" y="7" width="12" height="14" fill="#c9c9c9" />
        </svg>
      </OverTab>
      <OverTab $x={0} $y={66}>
        <svg width="74" height="64" viewBox="0 0 74 64">
          <defs>
            <linearGradient id="lg1" x1="0" x2="1"><stop offset=".35" stopColor="#fff" /><stop offset="1" stopColor="#fbe89a" stopOpacity=".2" /></linearGradient>
            <linearGradient id="lg2" x1="0" y1="0" x2="1" y2="1"><stop offset="0" stopColor="#f7df8c" /><stop offset="1" stopColor="#fff9e6" /></linearGradient>
          </defs>
          <path d="M1 22V6q0-5 5-5H73V21H14v11H6q-5 0-5-5z" fill="url(#lg1)" />
          <path d="M1 26V6q0-5 5-5H20" fill="none" stroke="#555" />
          <rect x="13" y="27" width="36" height="34" rx="5" fill="url(#lg2)" stroke="#666" />
          <g fill="#fff" stroke="#555"><line x1="30" y1="35" x2="21" y2="47" /><line x1="30" y1="35" x2="36" y2="54" /><circle cx="30" cy="35" r="2.6" /><circle cx="21" cy="47" r="2.8" /><circle cx="36" cy="54" r="2.8" /></g>
        </svg>
      </OverTab>
      <TabTitle $x={18} $y={71} $size={14}>Logical</TabTitle>

      <OverTab $x={1332} $y={602}>
        <svg width="64" height="62" viewBox="0 0 64 62">
          <defs>
            <linearGradient id="rg" x1="0" x2="1"><stop offset=".45" stopColor="#f9e088" /><stop offset=".8" stopColor="#fff" /></linearGradient>
          </defs>
          <rect x="16" y="1" width="36" height="40" rx="7" fill="#fff" stroke="#555" />
          <circle cx="34" cy="19" r="6" fill="#e5e5e5" stroke="#666" /><rect x="30" y="17" width="8" height="4" fill="#555" />
          <path d="M0 13H24q7 0 7 7v7H56q7 0 7 6V55q0 4-6 5H-20V13z" fill="url(#rg)" stroke="#5a5a5a" />
          <circle cx="13" cy="30" r="8.5" fill="#f2e4ae" stroke="#a9a9a0" strokeWidth="2" />
          <path d="M13 25v5h-4" fill="none" stroke="#a9a088" />
        </svg>
      </OverTab>
      <TabTitle $x={1305} $y={645} $size={13.5}>Realtime</TabTitle>

      <Floating>
        <FloatTitle>
          <AppGlyph /><span>CopyPC5</span>
          <FloatControls><Minimize c="#222" /><Maximize c="#444" /><CloseX c="#333" /></FloatControls>
        </FloatTitle>
        <TabsRow>
          <WinTab $w={61}>Physical</WinTab>
          <WinTab $w={52}>Config</WinTab>
          <WinTab $w={64} $on>Desktop</WinTab>
          <WinTab $w={106}>Custom Interface</WinTab>
        </TabsRow>
        <FrameWrap>
          <Teal>
            {[0, 1, 2, 3, 4].map(k => <AppTile key={k}><TileArt k={k} /></AppTile>)}
            <Overlay>
              <BrowserHead>
                <BrowserTitle>Web Browser</BrowserTitle>
                <BrowserClose>X</BrowserClose>
              </BrowserHead>
              <BrowserBar>
                <NavBtn $w={29}>&lt;</NavBtn>
                <NavBtn $w={29} $ml={7}>&gt;</NavBtn>
                <UrlLabel>URL</UrlLabel>
                <UrlInput>http://www.sistemabom.com.brD<Cursor /></UrlInput>
                <NavBtn $w={64} $ml={6}>Go</NavBtn>
                <NavBtn $w={64} $ml={7}>Stop</NavBtn>
              </BrowserBar>
              <WebArea>
                <WebBody>
                  <WebNav><span>Home</span><span>Sobre</span><span>Outros</span></WebNav>
                  <WebH1>SISTEMA BOM</WebH1>
                  <WebP>Lorem ipsum dolor sit amet consectetur, adipisicing elit. A deleniti ea accusamus, sed dolore atque officiis porro veniam fuga possimus voluptatem, eaque ad at</WebP>
                </WebBody>
                <WebVScroll>
                  <ScrollArrow><Chevron dir="up" /></ScrollArrow>
                  <WebThumb><ThumbGrip /></WebThumb>
                  <WebSpacer />
                  <ScrollArrow><Chevron dir="down" /></ScrollArrow>
                </WebVScroll>
                <WebHScroll><Chevron dir="left" c="#c4c4c4" /><Chevron dir="right" c="#c4c4c4" /></WebHScroll>
              </WebArea>
            </Overlay>
          </Teal>
          <FrameScroll>
            <ScrollArrow><Chevron dir="up" /></ScrollArrow>
            <FrameThumb><ThumbGrip $w={9} $h={11} /></FrameThumb>
            <ScrollArrow><Chevron dir="down" /></ScrollArrow>
          </FrameScroll>
        </FrameWrap>
      </Floating>
    </Page>
  );
}
